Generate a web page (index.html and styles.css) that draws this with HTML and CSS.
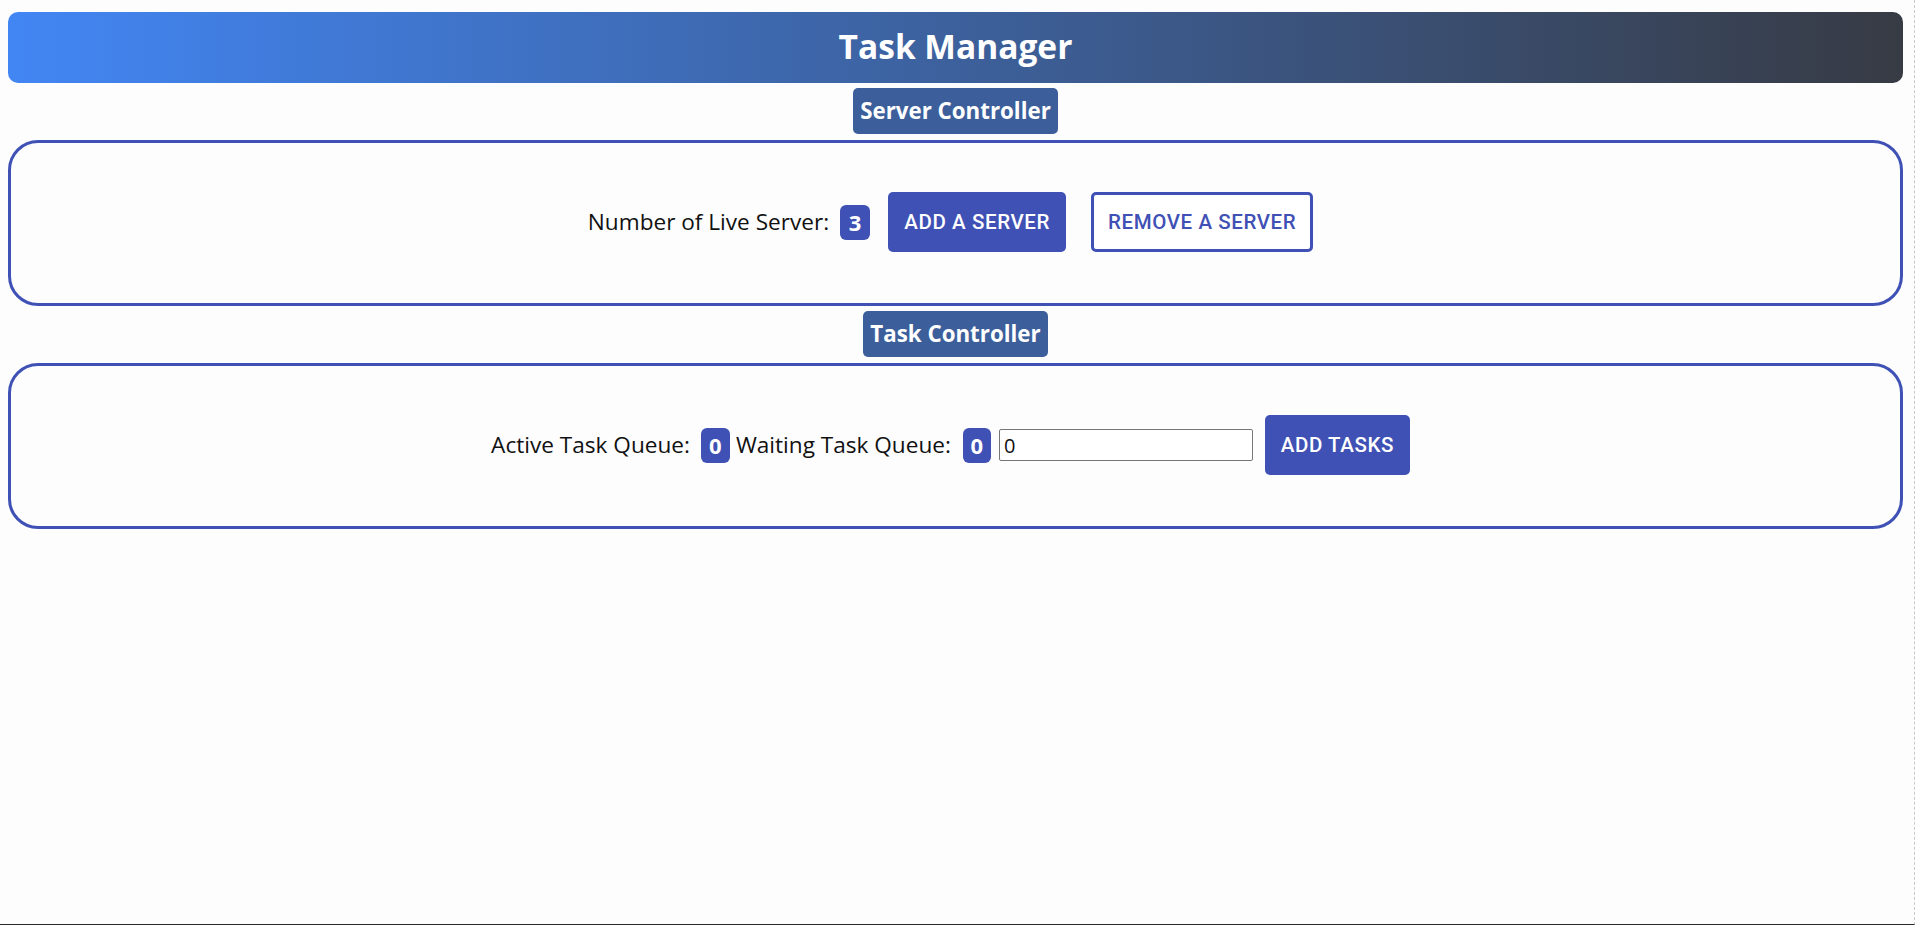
FILE: index.html
```html
<!DOCTYPE html>
<html lang="en">
<head>
<meta charset="utf-8">
<title>Task Manager</title>
<link rel="stylesheet" href="styles.css">
</head>
<body>
<div class="app">
  <header class="header"><h1 class="title">Task Manager</h1></header>

  <div class="section-head"><span class="section-title">Server Controller</span></div>
  <section class="panel">
    <div class="row">
      <span class="label">Number of Live Server:</span>
      <span class="count count-server">3</span>
      <button class="btn btn-filled">Add a Server</button>
      <button class="btn btn-outline">Remove a Server</button>
    </div>
  </section>

  <div class="section-head"><span class="section-title">Task Controller</span></div>
  <section class="panel">
    <div class="row">
      <span class="label">Active Task Queue:</span>
      <span class="count count-active">0</span>
      <span class="label">Waiting Task Queue:</span>
      <span class="count count-waiting">0</span>
      <input class="task-input" type="text" value="0">
      <button class="btn btn-filled btn-tasks">Add Tasks</button>
    </div>
  </section>
</div>
</body>
</html>
```
FILE: styles.css
```css
html {
  background: #fdfdfd;
}
html::after {
  content: "";
  position: fixed;
  top: 0;
  right: 0;
  bottom: 0;
  left: 0;
  border-right: 1px dashed #c8c8c8;
  border-bottom: 1px solid #2a2a2a;
  pointer-events: none;
}
body {
  margin: 8px;
  font-family: "Open Sans", "Noto Sans", sans-serif;
  color: #111;
}
.app {
  display: flex;
  flex-direction: column;
  padding-top: 4px;
  width: 1895px;
}
.header {
  height: 71px;
  border-radius: 10px;
  background: linear-gradient(to right, #4286f4, #373b44);
  display: flex;
  align-items: center;
  justify-content: center;
}
.title {
  margin: 0 0 4px;
  color: #fff;
  font-size: 33.5px;
  font-weight: 700;
  line-height: 42px;
}
.section-head {
  display: flex;
  justify-content: center;
  padding: 5px 0 6px;
}
.section-title {
  background: #3c5f9c;
  color: #fff;
  font-weight: 700;
  font-size: 22.3px;
  line-height: 30px;
  padding: 8px 7px;
  border-radius: 5px;
}
.panel {
  border: 3px solid #3f51b5;
  border-radius: 30px;
  height: 160px;
  display: flex;
  align-items: center;
  justify-content: center;
}
.row {
  display: flex;
  align-items: center;
  justify-content: center;
  margin-left: -10px;
  margin-top: -2px;
}
.label {
  font-size: 22.6px;
  line-height: 30px;
  color: #111;
}
.count {
  background: #3f51b5;
  color: #fff;
  font-weight: 700;
  font-size: 22px;
  height: 35px;
  width: 30px;
  border-radius: 6px;
  display: flex;
  align-items: center;
  justify-content: center;
  box-sizing: border-box;
}
.count-server {
  margin: 0 18px 0 11px;
}
.count-active {
  margin: 0 6px 0 11px;
  width: 29px;
}
.count-waiting {
  margin: 0 8px 0 12px;
  width: 28px;
}
.btn {
  font-family: Roboto, "Noto Sans", sans-serif;
  font-weight: 500;
  font-size: 20.5px;
  letter-spacing: 0.6px;
  text-transform: uppercase;
  height: 60px;
  border-radius: 5px;
  padding: 0 10px;
  box-sizing: border-box;
  cursor: pointer;
}
.btn-filled {
  background: #3f51b5;
  color: #fff;
  border: none;
  width: 178px;
}
.btn-outline {
  background: #fff;
  color: #3f51b5;
  border: 3px solid #3f51b5;
  margin-left: 25px;
  width: 222px;
}
.btn-tasks {
  width: 145px;
  margin-left: 12px;
}
.task-input {
  width: 254px;
  height: 32px;
  box-sizing: border-box;
  border: 1px solid #767676;
  border-radius: 2px;
  padding: 0 4px;
  font-family: "Open Sans", sans-serif;
  font-size: 20px;
  color: #111;
  background: #fff;
}
```
